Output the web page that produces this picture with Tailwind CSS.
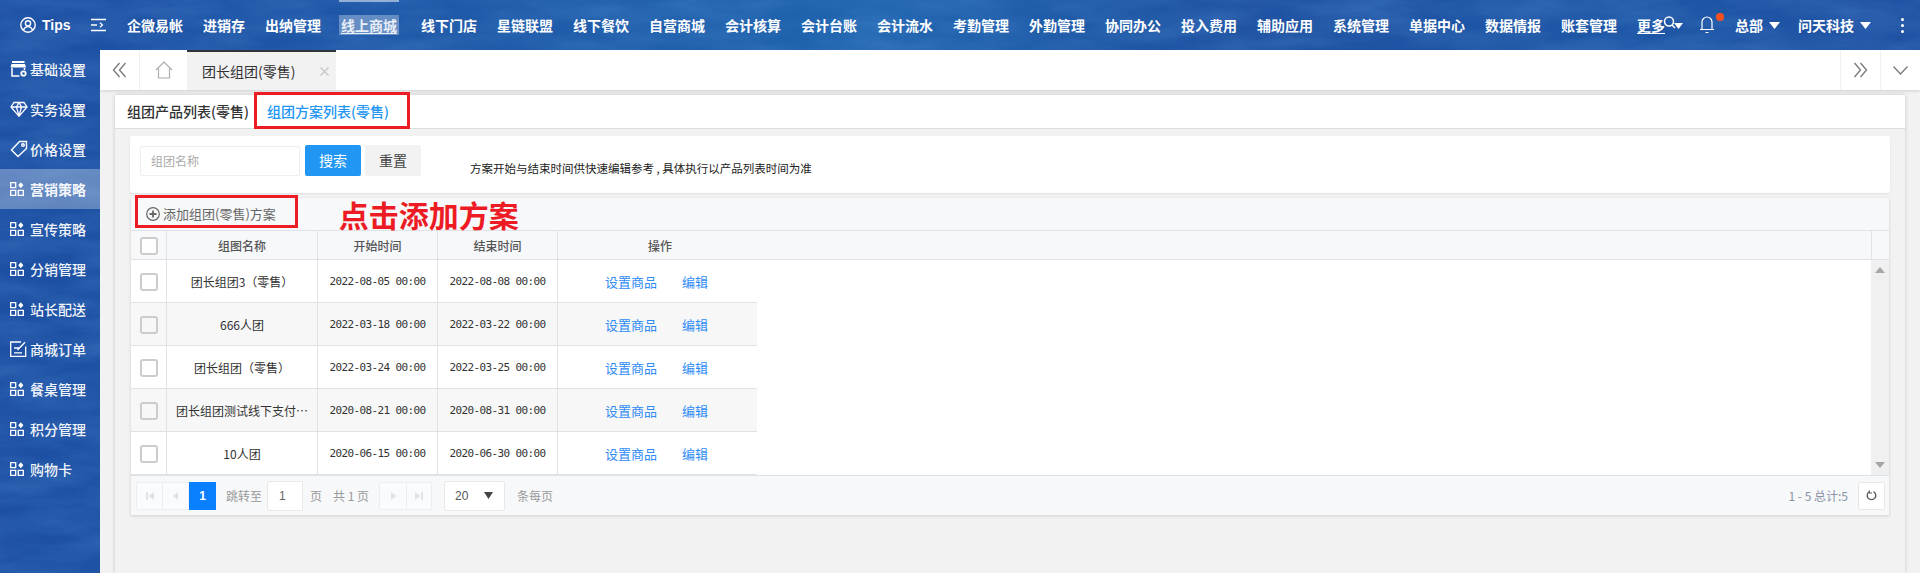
<!DOCTYPE html>
<html lang="zh">
<head>
<meta charset="utf-8">
<title>团长组团(零售)</title>
<script src="https://cdn.jsdelivr.net/npm/@tailwindcss/browser@4"></script>
</head>
<body class="relative w-[1920px] h-[573px] overflow-hidden bg-[#f2f2f2] font-['Noto_Sans_CJK_SC','Liberation_Sans',sans-serif]">

<!-- textured blue backdrop behind the top bar and sidebar -->
<div class="absolute inset-0 bg-[linear-gradient(90deg,#1d4fa2_0%,#1f5ca9_30%,#1f64ae_45%,#1f52a2_65%,#1e57a6_85%,#1f4fa1_100%)]">
  <svg class="absolute inset-0 opacity-30" width="1920" height="573" aria-hidden="true">
    <filter id="grain"><feTurbulence type="fractalNoise" baseFrequency="0.012 0.05" numOctaves="4" seed="7"/><feColorMatrix values="0 0 0 0 0.1  0 0 0 0 0.3  0 0 0 0 0.7  1.6 0 0 0 -0.45"/></filter>
    <rect width="1920" height="573" filter="url(#grain)"/>
  </svg>
</div>

<!-- top bar -->
<header class="relative h-[50px] flex items-center text-white text-[14px] font-bold whitespace-nowrap">
  <div class="flex items-center w-[127px] shrink-0">
    <svg class="ml-[20px]" width="16" height="16" viewBox="0 0 16 16" fill="none" stroke="#fff" stroke-width="1.4"><circle cx="8" cy="8" r="7.2"/><circle cx="8" cy="6.3" r="2.6"/><path d="M3.4 13c1-2.4 2.8-3.4 4.6-3.4s3.600 1 4.600 3.400"/></svg>
    <span class="ml-[6px] font-['Liberation_Sans',sans-serif]">Tips</span>
    <svg class="ml-[20px]" width="15" height="14" viewBox="0 0 15 14" fill="none" stroke="#fff" stroke-width="1.300"><path d="M0 1.500h15M0 7h6M0 12.500h15M9 4.800l2.400 2.200L9 9.200"/></svg>
  </div>
  <nav class="flex items-center gap-[20px]">
    <a>企微易帐</a><a>进销存</a><a>出纳管理</a>
    <a class="relative h-[20px] leading-[20px] px-[2px] -ml-[2px] mr-[2px] bg-white/30 text-white/85 underline underline-offset-2">线上商城<span class="absolute left-0 right-0 top-[-15px] h-[2px] bg-white/50"></span></a>
    <a>线下门店</a><a>星链联盟</a><a>线下餐饮</a><a>自营商城</a><a>会计核算</a><a>会计台账</a><a>会计流水</a><a>考勤管理</a><a>外勤管理</a><a>协同办公</a><a>投入费用</a><a>辅助应用</a><a>系统管理</a><a>单据中心</a><a>数据情报</a><a>账套管理</a>
    <a class="relative underline underline-offset-2">更多
      <svg class="absolute left-[24px] top-[0px]" width="16" height="16" viewBox="0 0 16 16" fill="none" stroke="#fff" stroke-width="1.500"><circle cx="8" cy="6.500" r="4.500"/><path d="M11 10l3 3"/></svg>
      <svg class="absolute left-[37px] top-[8px]" width="9" height="6" viewBox="0 0 9 6" fill="#fff"><path d="M0 0h9L4.500 6z"/></svg>
    </a>
  </nav>
  <div class="absolute left-[1699px] top-[15px]">
    <svg width="16" height="20" viewBox="0 0 16 20" fill="none" stroke="#fff" stroke-width="1.200"><path d="M3 14V7a5 5 0 0 1 10 0v7M1 14.500h14M6.500 17.500h3"/></svg>
    <span class="absolute left-[17px] top-[-2px] w-[8px] h-[8px] rounded-full bg-[#f4511e]"></span>
  </div>
  <div class="absolute left-[1735px] top-0 h-[50px] flex items-center">
    <span>总部</span>
    <svg class="ml-[6px]" width="11" height="7" viewBox="0 0 11 7" fill="#fff"><path d="M0 0h11L5.500 7z"/></svg>
    <span class="ml-[18px]">问天科技</span>
    <svg class="ml-[6px]" width="11" height="7" viewBox="0 0 11 7" fill="#fff"><path d="M0 0h11L5.500 7z"/></svg>
    <span class="ml-[30px] flex flex-col gap-[3px]"><i class="block w-[3px] h-[3px] bg-white rounded-full"></i><i class="block w-[3px] h-[3px] bg-white rounded-full"></i><i class="block w-[3px] h-[3px] bg-white rounded-full"></i></span>
  </div>
</header>

<div class="relative flex h-[523px]">
  <!-- sidebar -->
  <aside class="w-[100px] shrink-0 -mt-px text-[14px] font-medium text-white/95 whitespace-nowrap">
    <div class="h-[40px] flex items-center pl-[10px] gap-[2px]">
      <svg width="18" height="16" viewBox="0 0 18 16"><path d="M2 0h12.500v2H2zM1.500 3h13.500l1 3.500H.5z" fill="#fff"/><path d="M2 7v8h7.500M14.500 7v2" fill="none" stroke="#fff" stroke-width="1.500"/><circle cx="13.500" cy="12.500" r="2.200" fill="none" stroke="#fff" stroke-width="1.800"/></svg><span>基础设置</span></div>
    <div class="h-[40px] flex items-center pl-[10px] gap-[2px]">
      <svg width="18" height="16" viewBox="0 0 18 16" fill="none" stroke="#fff" stroke-width="1.300"><path d="M4 1.500h10L17 6l-8 9.300L1 6zM1 6h16M6.500 6L9 15l2.500-9M6.500 6L9 1.500 11.500 6"/></svg><span>实务设置</span></div>
    <div class="h-[40px] flex items-center pl-[10px] gap-[2px]">
      <svg width="18" height="18" viewBox="0 0 18 18" fill="none" stroke="#fff" stroke-width="1.400"><path d="M9.500 1.500H16.500V8.500L8 16.500 1.500 10z"/><circle cx="13" cy="5" r="1.300"/></svg><span>价格设置</span></div>
    <div class="h-[40px] flex items-center pl-[10px] gap-[6px] bg-white/30 font-bold">
      <svg width="14" height="14" viewBox="0 0 14 14" fill="none" stroke="#fff" stroke-width="1.300"><path d="M.7.700h5v5h-5zM.7 8.300h5v5h-5zM8.300 8.300h5v5h-5z"/><path d="M10.800.2l2.600 3-2.600 3-2.600-3z" fill="#fff" stroke="none"/></svg><span>营销策略</span></div>
    <div class="h-[40px] flex items-center pl-[10px] gap-[6px]">
      <svg width="14" height="14" viewBox="0 0 14 14" fill="none" stroke="#fff" stroke-width="1.300"><path d="M.7.700h5v5h-5zM.7 8.300h5v5h-5zM8.300 8.300h5v5h-5z"/><path d="M10.800.2l2.600 3-2.600 3-2.600-3z" fill="#fff" stroke="none"/></svg><span>宣传策略</span></div>
    <div class="h-[40px] flex items-center pl-[10px] gap-[6px]">
      <svg width="14" height="14" viewBox="0 0 14 14" fill="none" stroke="#fff" stroke-width="1.300"><path d="M.7.700h5v5h-5zM.7 8.300h5v5h-5zM8.300 8.300h5v5h-5z"/><path d="M10.800.2l2.600 3-2.600 3-2.600-3z" fill="#fff" stroke="none"/></svg><span>分销管理</span></div>
    <div class="h-[40px] flex items-center pl-[10px] gap-[6px]">
      <svg width="14" height="14" viewBox="0 0 14 14" fill="none" stroke="#fff" stroke-width="1.300"><path d="M.7.700h5v5h-5zM.7 8.300h5v5h-5zM8.300 8.300h5v5h-5z"/><path d="M10.800.2l2.600 3-2.600 3-2.600-3z" fill="#fff" stroke="none"/></svg><span>站长配送</span></div>
    <div class="h-[40px] flex items-center pl-[10px] gap-[3px]">
      <svg width="17" height="16" viewBox="0 0 17 16" fill="none" stroke="#fff" stroke-width="1.300"><path d="M11 1H.7v14.300h15V5.500M4 7h5M4 11.800h8M7.500 9L15 1.300"/></svg><span>商城订单</span></div>
    <div class="h-[40px] flex items-center pl-[10px] gap-[6px]">
      <svg width="14" height="14" viewBox="0 0 14 14" fill="none" stroke="#fff" stroke-width="1.300"><path d="M.7.700h5v5h-5zM.7 8.300h5v5h-5zM8.300 8.300h5v5h-5z"/><path d="M10.800.2l2.600 3-2.600 3-2.600-3z" fill="#fff" stroke="none"/></svg><span>餐桌管理</span></div>
    <div class="h-[40px] flex items-center pl-[10px] gap-[6px]">
      <svg width="14" height="14" viewBox="0 0 14 14" fill="none" stroke="#fff" stroke-width="1.300"><path d="M.7.700h5v5h-5zM.7 8.300h5v5h-5zM8.300 8.300h5v5h-5z"/><path d="M10.800.2l2.600 3-2.600 3-2.600-3z" fill="#fff" stroke="none"/></svg><span>积分管理</span></div>
    <div class="h-[40px] flex items-center pl-[10px] gap-[6px]">
      <svg width="14" height="14" viewBox="0 0 14 14" fill="none" stroke="#fff" stroke-width="1.300"><path d="M.7.700h5v5h-5zM.7 8.300h5v5h-5zM8.300 8.300h5v5h-5z"/><path d="M10.800.2l2.600 3-2.600 3-2.600-3z" fill="#fff" stroke="none"/></svg><span>购物卡</span></div>
  </aside>

  <!-- main -->
  <main class="w-[1820px] h-[523px] bg-[#f2f2f2] flex flex-col overflow-hidden">
    <!-- tab bar -->
    <div class="h-[40px] shrink-0 bg-white flex shadow-[0_1px_3px_rgba(0,0,0,0.15)] relative">
      <div class="w-[40px] border-r border-[#f0f0f0] flex items-center justify-center">
        <svg width="15" height="16" viewBox="0 0 15 16" fill="none" stroke="#777" stroke-width="1.300"><path d="M7.500 1L1.500 8l6 7M13.500 1l-6 7 6 7"/></svg>
      </div>
      <div class="w-[47px] flex items-center justify-center">
        <svg width="18" height="18" viewBox="0 0 18 18" fill="none" stroke="#aaa" stroke-width="1.100"><path d="M1 9l8-8 8 8M3.500 7.500v9.500h11V7.500"/></svg>
      </div>
      <div class="w-[149px] bg-[#f2f2f2] border-t-[2px] border-[#33333a] flex items-center text-[14px] text-[#333] pl-[15px] relative">
        <span>团长组团(零售)</span>
        <svg class="absolute left-[133px] top-[15px]" width="9" height="9" viewBox="0 0 9 9" stroke="#c4c4c4" stroke-width="1.100"><path d="M.5.500l8 8M8.500.500l-8 8"/></svg>
      </div>
      <div class="flex-1"></div>
      <div class="w-[40px] border-l border-[#f0f0f0] flex items-center justify-center">
        <svg width="15" height="16" viewBox="0 0 15 16" fill="none" stroke="#777" stroke-width="1.300"><path d="M1.500 1l6 7-6 7M7.500 1l6 7-6 7"/></svg>
      </div>
      <div class="w-[40px] border-l border-[#f0f0f0] flex items-center justify-center">
        <svg width="15" height="9" viewBox="0 0 15 9" fill="none" stroke="#777" stroke-width="1.200"><path d="M.5.500l7 7.500 7-7.500"/></svg>
      </div>
    </div>

    <!-- card -->
    <section class="relative ml-[15px] mt-[5px] w-[1790px] flex-1 bg-[#f2f2f2] shadow-[0_0_4px_rgba(0,0,0,0.18)]">
      <div class="h-[34px] bg-white border-b border-[#dddddd] flex items-center pl-[12px] text-[14px]">
        <span class="font-medium text-[#333]">组团产品列表(零售)</span>
        <span class="ml-[18px] font-medium text-[#2196f3]">组团方案列表(零售)</span>
      </div>
      <div class="absolute left-[139px] top-[-3px] w-[156px] h-[37px] border-[3px] border-[#ed1c24]"></div>

      <!-- search panel -->
      <div class="relative ml-[15px] mt-[7px] w-[1760px] h-[57px] bg-white rounded-[2px] shadow-[0_1px_2px_rgba(0,0,0,0.08)] flex pl-[10px] pt-[9px]">
        <div class="w-[160px] h-[30px] mt-[1px] border border-[#eeeeee] rounded-[2px] flex items-center pl-[10px] text-[12px] text-[#aaaaaa]">组团名称</div>
        <div class="ml-[5px] w-[56px] h-[31px] bg-[#2196f3] rounded-[2px] text-white text-[14px] flex items-center justify-center">搜索</div>
        <div class="ml-[4px] w-[56px] h-[31px] bg-[#f2f2f2] rounded-[2px] text-[#444] text-[14px] flex items-center justify-center">重置</div>
        <div class="ml-[49px] mt-[13px] text-[11.500px] leading-[20px] text-[#222] whitespace-nowrap">方案开始与结束时间供快速编辑参考 , 具体执行以产品列表时间为准</div>
      </div>

      <!-- table panel -->
      <div class="relative ml-[16px] mt-[5px] w-[1758px] h-[317px] bg-[#f7f8fa] shadow-[0_1px_3px_rgba(0,0,0,0.15)] flex flex-col">
        <div class="h-[33px] shrink-0 flex items-center border-b border-[#dfe3e8]">
          <svg class="ml-[15px]" width="14" height="14" viewBox="0 0 14 14" fill="none" stroke="#666" stroke-width="1.200"><circle cx="7" cy="7" r="6.300"/><path d="M3.500 7h7M7 3.500v7" stroke-width="1.800"/></svg>
          <span class="ml-[3px] text-[13px] text-[#666] whitespace-nowrap">添加组团(零售)方案</span>
          <span class="ml-[63px] text-[30px] leading-[33px] font-bold text-[#ed1c24] whitespace-nowrap">点击添加方案</span>
        </div>
        <div class="absolute left-[4px] top-[-3px] w-[163px] h-[33px] border-[3px] border-[#ed1c24]"></div>

        <!-- header -->
        <div class="h-[29px] shrink-0 flex border-b border-[#dfe3e8] text-[12px] font-medium text-[#555] [&>div]:pt-[2px]">
          <div class="w-[36px] border-r border-[#dfe3e8] flex items-center justify-center"><span class="block w-[18px] h-[18px] border-[2px] border-[#cccccc] rounded-[3px] bg-white"></span></div>
          <div class="w-[151px] border-r border-[#dfe3e8] flex items-center justify-center">组图名称</div>
          <div class="w-[120px] border-r border-[#dfe3e8] flex items-center justify-center">开始时间</div>
          <div class="w-[120px] border-r border-[#dfe3e8] flex items-center justify-center">结束时间</div>
          <div class="w-[199px] flex items-center justify-center pl-[5px]">操作</div>
          <div class="ml-auto w-[18px] border-l border-[#dfe3e8]"></div>
        </div>

        <!-- body -->
        <div class="h-[215px] shrink-0 bg-white flex relative">
          <div class="w-[626px] text-[12px] text-[#333] [&>div>div]:pt-[2px]">
            <div class="h-[43px] flex border-b border-[#e2e2e2] bg-white">
              <div class="w-[36px] border-r border-[#e2e2e2] flex items-center justify-center"><span class="block w-[18px] h-[18px] border-[2px] border-[#cccccc] rounded-[3px] bg-white"></span></div>
              <div class="w-[151px] border-r border-[#e2e2e2] flex items-center justify-center">团长组团3（零售）</div>
              <div class="w-[120px] border-r border-[#e2e2e2] flex items-center justify-center font-['DejaVu_Sans_Mono',monospace] text-[11px] tracking-[-0.62px]">2022-08-05 00:00</div>
              <div class="w-[120px] border-r border-[#e2e2e2] flex items-center justify-center font-['DejaVu_Sans_Mono',monospace] text-[11px] tracking-[-0.62px]">2022-08-08 00:00</div>
              <div class="w-[199px] flex items-center pl-[47px] gap-[25px] text-[13px] text-[#2f8cf5]"><span>设置商品</span><span>编辑</span></div>
            </div>
            <div class="h-[43px] flex border-b border-[#e2e2e2] bg-[#f7f7f7]">
              <div class="w-[36px] border-r border-[#e2e2e2] flex items-center justify-center"><span class="block w-[18px] h-[18px] border-[2px] border-[#cccccc] rounded-[3px]"></span></div>
              <div class="w-[151px] border-r border-[#e2e2e2] flex items-center justify-center">666人团</div>
              <div class="w-[120px] border-r border-[#e2e2e2] flex items-center justify-center font-['DejaVu_Sans_Mono',monospace] text-[11px] tracking-[-0.62px]">2022-03-18 00:00</div>
              <div class="w-[120px] border-r border-[#e2e2e2] flex items-center justify-center font-['DejaVu_Sans_Mono',monospace] text-[11px] tracking-[-0.62px]">2022-03-22 00:00</div>
              <div class="w-[199px] flex items-center pl-[47px] gap-[25px] text-[13px] text-[#2f8cf5]"><span>设置商品</span><span>编辑</span></div>
            </div>
            <div class="h-[43px] flex border-b border-[#e2e2e2] bg-white">
              <div class="w-[36px] border-r border-[#e2e2e2] flex items-center justify-center"><span class="block w-[18px] h-[18px] border-[2px] border-[#cccccc] rounded-[3px] bg-white"></span></div>
              <div class="w-[151px] border-r border-[#e2e2e2] flex items-center justify-center">团长组团（零售）</div>
              <div class="w-[120px] border-r border-[#e2e2e2] flex items-center justify-center font-['DejaVu_Sans_Mono',monospace] text-[11px] tracking-[-0.62px]">2022-03-24 00:00</div>
              <div class="w-[120px] border-r border-[#e2e2e2] flex items-center justify-center font-['DejaVu_Sans_Mono',monospace] text-[11px] tracking-[-0.62px]">2022-03-25 00:00</div>
              <div class="w-[199px] flex items-center pl-[47px] gap-[25px] text-[13px] text-[#2f8cf5]"><span>设置商品</span><span>编辑</span></div>
            </div>
            <div class="h-[43px] flex border-b border-[#e2e2e2] bg-[#f7f7f7]">
              <div class="w-[36px] border-r border-[#e2e2e2] flex items-center justify-center"><span class="block w-[18px] h-[18px] border-[2px] border-[#cccccc] rounded-[3px]"></span></div>
              <div class="w-[151px] border-r border-[#e2e2e2] flex items-center justify-center whitespace-nowrap">团长组团测试线下支付…</div>
              <div class="w-[120px] border-r border-[#e2e2e2] flex items-center justify-center font-['DejaVu_Sans_Mono',monospace] text-[11px] tracking-[-0.62px]">2020-08-21 00:00</div>
              <div class="w-[120px] border-r border-[#e2e2e2] flex items-center justify-center font-['DejaVu_Sans_Mono',monospace] text-[11px] tracking-[-0.62px]">2020-08-31 00:00</div>
              <div class="w-[199px] flex items-center pl-[47px] gap-[25px] text-[13px] text-[#2f8cf5]"><span>设置商品</span><span>编辑</span></div>
            </div>
            <div class="h-[43px] flex border-b border-[#e2e2e2] bg-white">
              <div class="w-[36px] border-r border-[#e2e2e2] flex items-center justify-center"><span class="block w-[18px] h-[18px] border-[2px] border-[#cccccc] rounded-[3px] bg-white"></span></div>
              <div class="w-[151px] border-r border-[#e2e2e2] flex items-center justify-center">10人团</div>
              <div class="w-[120px] border-r border-[#e2e2e2] flex items-center justify-center font-['DejaVu_Sans_Mono',monospace] text-[11px] tracking-[-0.62px]">2020-06-15 00:00</div>
              <div class="w-[120px] border-r border-[#e2e2e2] flex items-center justify-center font-['DejaVu_Sans_Mono',monospace] text-[11px] tracking-[-0.62px]">2020-06-30 00:00</div>
              <div class="w-[199px] flex items-center pl-[47px] gap-[25px] text-[13px] text-[#2f8cf5]"><span>设置商品</span><span>编辑</span></div>
            </div>
          </div>
          <div class="ml-auto w-[18px] bg-[#f0f0f0] flex flex-col items-center justify-between py-[7px]">
            <svg width="10" height="6" viewBox="0 0 10 6" fill="#a6a6a6"><path d="M5 0l5 6H0z"/></svg>
            <svg width="10" height="6" viewBox="0 0 10 6" fill="#a6a6a6"><path d="M5 6l5-6H0z"/></svg>
          </div>
        </div>

        <!-- footer -->
        <div class="flex-1 border-t border-[#dfe3e8] flex items-center text-[12px] text-[#999] whitespace-nowrap relative">
          <div class="ml-[5px] w-[53px] h-[28px] bg-[#fafbfc] border border-[#eeeeee] rounded-l-[2px] flex">
            <div class="w-[26px] border-r border-[#eeeeee] flex items-center justify-center"><svg width="8" height="8" viewBox="0 0 8 8" fill="#e2e2e2"><path d="M0 0h2v8H0zM8 0v8L2.500 4z"/></svg></div>
            <div class="flex-1 flex items-center justify-center"><svg width="5" height="8" viewBox="0 0 5 8" fill="#e2e2e2"><path d="M5 0v8L0 4z"/></svg></div>
          </div>
          <div class="w-[27px] h-[28px] bg-[#0a80ff] text-white flex items-center justify-center font-['Liberation_Sans',sans-serif] font-bold">1</div>
          <span class="ml-[10px]">跳转至</span>
          <div class="ml-[5px] w-[36px] h-[30px] bg-white border border-[#e8e8e8] rounded-[2px] flex items-center pl-[11px] text-[#666] font-['Liberation_Sans',sans-serif]">1</div>
          <span class="ml-[7px]">页</span>
          <span class="ml-[11px]">共 1 页</span>
          <div class="ml-[10px] w-[53px] h-[28px] bg-[#fafbfc] border border-[#eeeeee] rounded-[2px] flex">
            <div class="w-[27px] border-r border-[#eeeeee] flex items-center justify-center"><svg width="5" height="8" viewBox="0 0 5 8" fill="#e2e2e2"><path d="M0 0v8l5-4z"/></svg></div>
            <div class="flex-1 flex items-center justify-center"><svg width="8" height="8" viewBox="0 0 8 8" fill="#e2e2e2"><path d="M6 0h2v8H6zM0 0v8l5.500-4z"/></svg></div>
          </div>
          <div class="ml-[12px] w-[61px] h-[30px] bg-white border border-[#e8e8e8] rounded-[2px] flex items-center justify-between pl-[10px] pr-[11px] text-[#555] font-['Liberation_Sans',sans-serif]">20<svg width="9" height="7" viewBox="0 0 9 7" fill="#444"><path d="M0 0h9L4.500 7z"/></svg></div>
          <span class="ml-[12px]">条每页</span>
          <span class="ml-auto text-[#8a93a6]">1 - 5 总计:5</span>
          <div class="ml-[10px] mr-[4px] w-[27px] h-[28px] bg-white border border-[#e8e8e8] rounded-[2px] flex items-center justify-center">
            <svg width="11" height="11" viewBox="0 0 11 11" fill="none" stroke="#555" stroke-width="1.300"><path d="M7.500 1.600A4.300 4.300 0 1 1 3.500 1.600"/><path d="M3.300 .3v2.700h2.700" stroke-width="1"/></svg>
          </div>
        </div>
      </div>
    </section>
  </main>
</div>
</body>
</html>
